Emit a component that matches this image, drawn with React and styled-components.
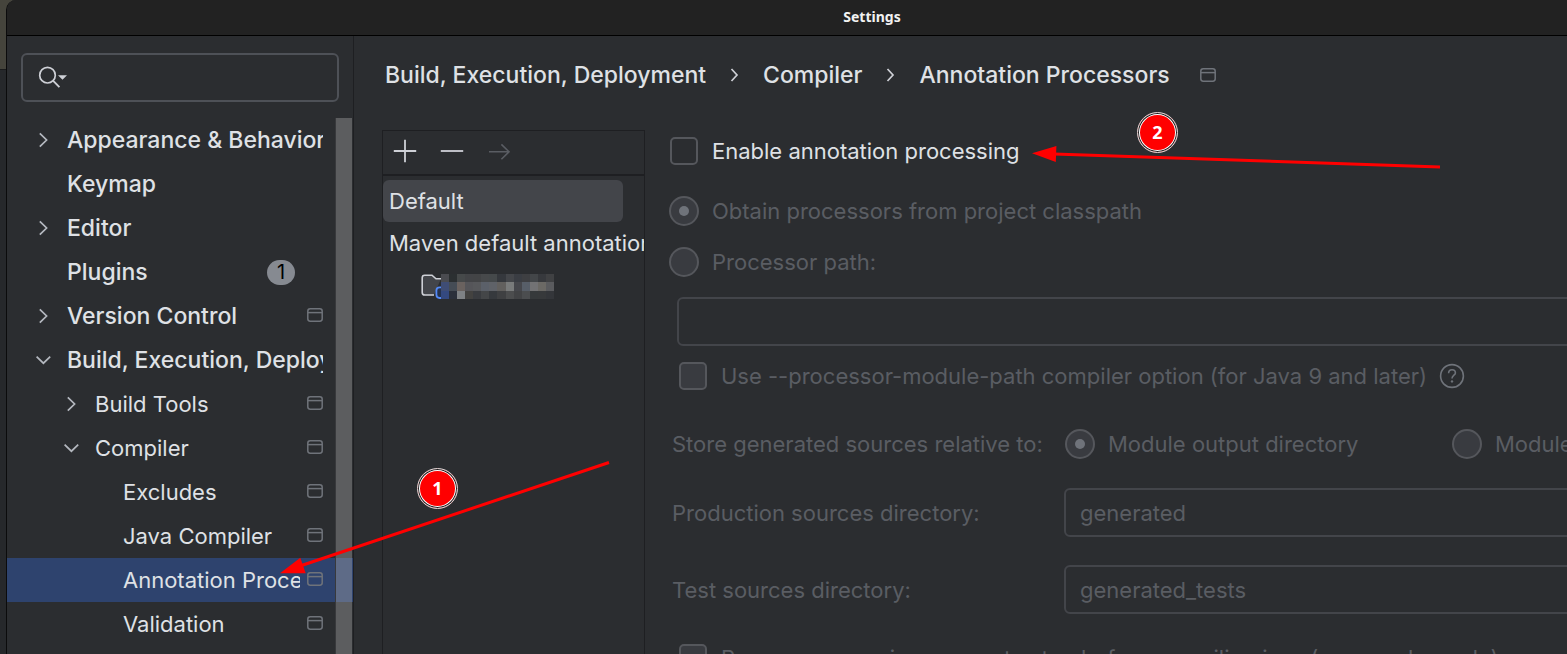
import styled, { createGlobalStyle } from "styled-components";

const GlobalStyle = createGlobalStyle`
  * {
    box-sizing: border-box;
  }

  body {
    margin: 0;
    background-color: #26282b;
    overflow: hidden;
  }

  body, input, button {
    font-family: Inter, sans-serif;
    font-size: 22px;
    line-height: 28px;
    color: #dfe1e5;
  }
`;

const Desktop = styled.div`
  position: relative;
  height: 100vh;
  overflow: hidden;
  padding-left: 6px;
  background: linear-gradient(#45443c 69px, #1a1b1c 69px, #1a1b1c 70px, #26282b 70px);
`;

/* The dialog is wider than the screen and runs off its right edge */
const Window = styled.div`
  height: 100%;
  margin-right: -170px;
  display: flex;
  flex-direction: column;
  border-left: 1px solid #0b0b0c;
  border-top-left-radius: 10px;
  background-color: #2b2d30;
  overflow: hidden;
`;

const TitleBar = styled.header`
  flex: none;
  height: 36px;
  display: flex;
  align-items: center;
  justify-content: center;
  padding-bottom: 1px;
  background-color: #222222;
  border-bottom: 1px solid #000;
  font-family: "Noto Sans", sans-serif;
  font-size: 14px;
  font-weight: 700;
  line-height: 20px;
  color: #f2f2f2;
`;

const Body = styled.div`
  flex: 1;
  min-height: 0;
  display: flex;
`;

const Sidebar = styled.aside`
  flex: none;
  width: 347px;
  display: flex;
  flex-direction: column;
  padding-top: 17px;
  border-right: 1px solid #1e1f22;
`;

const SearchBox = styled.label`
  flex: none;
  height: 49px;
  margin: 0 14px 16px;
  padding-left: 15px;
  display: flex;
  align-items: center;
  gap: 6px;
  border: 2px solid #4e5157;
  border-radius: 6px;
`;

const SearchInput = styled.input`
  flex: 1;
  min-width: 0;
  border: none;
  outline: none;
  background: none;
`;

const TreeArea = styled.nav`
  position: relative;
  flex: 1;
  min-height: 0;
  overflow: hidden;
`;

const Tree = styled.ul`
  margin: 0;
  padding: 0;
  list-style: none;
`;

const TreeRow = styled.li`
  height: 44px;
  display: flex;
  align-items: center;
  padding-left: ${(props) => 24 + props.$level * 28}px;
  padding-right: 30px;
  background-color: ${(props) => (props.$selected ? "#2e436e" : "transparent")};
  font-size: ${(props) => (props.$level === 0 ? 23 : 22)}px;
  font-weight: ${(props) => (props.$level === 0 ? 500 : 400)};
`;

const ChevronSlot = styled.span`
  flex: none;
  width: 24px;
  margin-right: 12px;
  display: flex;
  justify-content: center;
`;

const TreeLabel = styled.span`
  flex: 1;
  min-width: 0;
  overflow: hidden;
  white-space: nowrap;
`;

const CountBadge = styled.span`
  width: 28px;
  height: 25px;
  margin-right: 28px;
  border-radius: 13px;
  background-color: #868a91;
  color: #000;
  font-size: 20px;
  font-weight: 400;
  line-height: 25px;
  text-align: center;
`;

const RowIcon = styled.span`
  flex: none;
  display: flex;
  margin-left: 7px;
  padding-bottom: 2px;
`;

const ScrollThumb = styled.div`
  position: absolute;
  top: 0;
  right: 1px;
  bottom: 0;
  width: 17px;
  background-color: rgba(182, 182, 182, 0.35);
  border-left: 1px solid #38393c;
`;

const Main = styled.main`
  flex: 1;
  min-width: 0;
  display: flex;
  flex-direction: column;
  padding-left: 28px;
`;

const Breadcrumbs = styled.nav`
  flex: none;
  height: 94px;
  display: flex;
  align-items: center;
  gap: 24px;
  padding: 0 0 16px 3px;
  font-size: 23px;
  font-weight: 500;
  white-space: nowrap;
`;

const Crumb = styled.a`
  color: inherit;
  text-decoration: none;
`;

const CrumbIcon = styled.span`
  display: flex;
  margin-left: 6px;
`;

const Panels = styled.div`
  flex: 1;
  min-height: 0;
  display: flex;
`;

const ProfilePanel = styled.section`
  flex: none;
  width: 263px;
  overflow: hidden;
  border: 1px solid #1e1f22;
  border-bottom: none;
`;

const Toolbar = styled.div`
  height: 45px;
  display: flex;
  align-items: center;
  gap: 23px;
  padding: 0 0 3px 10px;
  border-bottom: 2px solid #1e1f22;
`;

const ToolButton = styled.button`
  width: 24px;
  height: 24px;
  padding: 0;
  display: flex;
  align-items: center;
  justify-content: center;
  border: none;
  background: none;
`;

const ProfileList = styled.ul`
  margin: 0;
  padding: 4px 0 0;
  list-style: none;
`;

const ProfileRow = styled.li`
  height: ${(props) => (props.$nested ? 46 : 42)}px;
  display: flex;
  align-items: center;
  margin-right: ${(props) => (props.$selected ? 21 : 0)}px;
  padding-left: ${(props) => (props.$nested ? 38 : 6)}px;
  border-radius: 6px;
  background-color: ${(props) => (props.$selected ? "#43454a" : "transparent")};
  white-space: nowrap;
`;

const ProfileName = styled.span`
  min-width: 0;
  overflow: hidden;
`;

const Form = styled.form`
  flex: 1;
  min-width: 0;
  padding-left: 24px;
  white-space: nowrap;
`;

const Choice = styled.label`
  display: flex;
  align-items: center;
  gap: 13px;
  color: ${(props) => (props.$disabled ? "#5a5d63" : "#dfe1e5")};
`;

const CheckRow = styled.div`
  height: 42px;
  display: flex;
  align-items: center;
  gap: 12px;
  margin-top: ${(props) => props.$top || 0}px;
  padding-left: ${(props) => (props.$nested ? 9 : 0)}px;
`;

const RadioRow = styled.div`
  height: 51px;
  display: flex;
  align-items: center;
`;

const RadioGroup = styled.div`
  margin-top: 13px;
`;

const Checkbox = styled.input`
  appearance: none;
  flex: none;
  width: 28px;
  height: 28px;
  margin: 0 1px;
  border: 2px solid #55575c;
  border-radius: 5px;

  &:disabled {
    background-color: #393b40;
  }
`;

const Radio = styled.input`
  appearance: none;
  flex: none;
  width: 30px;
  height: 30px;
  margin: 0;
  display: grid;
  place-items: center;
  border: 2px solid #55575c;
  border-radius: 50%;
  background-color: #393b40;

  &:checked::before {
    content: "";
    width: 10px;
    height: 10px;
    border-radius: 50%;
    background-color: #6f737a;
  }
`;

const TextField = styled.input`
  min-width: 0;
  height: 49px;
  padding: 0 14px;
  border: 2px solid #43454a;
  border-radius: 6px;
  background: none;
  color: #5a5d63;
`;

const PathRow = styled.div`
  display: grid;
  margin-top: 10px;
  padding-left: 8px;
`;

const FieldRow = styled.div`
  display: grid;
  grid-template-columns: 392px 1fr;
  align-items: center;
  min-height: 42px;
  margin-top: ${(props) => props.$top}px;
  padding-left: 3px;
  color: #5a5d63;
`;

const InlineRadios = styled.div`
  display: grid;
  grid-template-columns: 387px 1fr;
  padding-left: 1px;
`;

const HelpButton = styled.button`
  display: flex;
  padding: 0;
  border: none;
  background: none;
`;

const Annotations = styled.svg`
  position: absolute;
  top: 0;
  left: 0;
  width: 100%;
  height: 100%;
  pointer-events: none;
`;

const Marker = styled.span`
  position: absolute;
  left: ${(props) => props.$x}px;
  top: ${(props) => props.$y}px;
  width: 41px;
  height: 41px;
  border: 1px solid #d8d8d8;
  border-radius: 50%;
  background-color: #f00;
  box-shadow: inset 0 0 0 1px #1c1c1e, inset 0 0 0 2px #fff;
  color: #fff;
  font-family: "Noto Sans", sans-serif;
  font-size: 18px;
  font-weight: 700;
  line-height: 38px;
  text-align: center;
`;

const Chevron = ({ open }) => (
  <svg width="16" height="16" viewBox="0 0 16 16" fill="none" stroke="#b4b8bf" strokeWidth="1.7">
    <path d={open ? "M1.6 4.6 L8.4 11.2 L15.2 4.6" : "M4.8 1.4 L11.6 8 L4.8 14.6"} />
  </svg>
);

const CrumbChevron = () => (
  <svg width="9" height="14" viewBox="0 0 9 14" fill="none" stroke="#ced0d6" strokeWidth="1.7">
    <path d="M1.5 1 L7 7 L1.5 13" />
  </svg>
);

const ProjectIcon = () => (
  <svg width="16" height="14" viewBox="0 0 16 14" fill="none" stroke="#6f737a" strokeWidth="1.5">
    <rect x="0.8" y="0.8" width="14.4" height="12.4" rx="2.4" />
    <path d="M1 4.6 H15" />
  </svg>
);

const SearchIcon = () => (
  <svg width="30" height="24" viewBox="0 0 30 24" fill="none">
    <circle cx="9.5" cy="9.2" r="7.8" stroke="#ced0d6" strokeWidth="1.7" />
    <path d="M15 14.7 L21.4 21.1" stroke="#ced0d6" strokeWidth="1.9" />
    <path d="M20 9.3 H29 L24.5 13.7 Z" fill="#ced0d6" />
  </svg>
);

const PlusIcon = () => (
  <svg width="24" height="24" viewBox="0 0 24 24" stroke="#ced0d6" strokeWidth="1.8">
    <path d="M12 0.8 V23.2 M0.8 12 H23.2" />
  </svg>
);

const MinusIcon = () => (
  <svg width="24" height="24" viewBox="0 0 24 24" stroke="#ced0d6" strokeWidth="1.8">
    <path d="M0.8 12 H23.2" />
  </svg>
);

const ArrowIcon = () => (
  <svg width="24" height="24" viewBox="0 0 24 24" fill="none" stroke="#5a5d63" strokeWidth="1.6">
    <path d="M2 12.8 H22 M14.4 5.4 L22 12.8 L14.4 20.2" />
  </svg>
);

const HelpIcon = () => (
  <svg width="26" height="26" viewBox="0 0 26 26" fill="none" stroke="#6f737a" strokeWidth="1.6">
    <circle cx="13" cy="13" r="11.4" />
    <path d="M9.6 10.2 C9.7 8 11.1 6.8 13 6.8 C15 6.8 16.4 8 16.4 9.9 C16.4 12.2 13 12.4 13 15.6" />
    <circle cx="13" cy="18.4" r="1.2" fill="#6f737a" stroke="none" />
  </svg>
);

const pixels = [
  ["4a4b50", "2b2f31", "46494a", "434447", "434446", "47494b", "45494b", "35383d", "44464a", "3a3d43", "3e3f42", "434649", "37393d", "404143"],
  ["3f4d75", "454c55", "6a625f", "555559", "57585b", "5b6069", "5f6268", "62605e", "797b7b", "46474c", "575e68", "727274", "6b6965", "5a5b5e"],
  ["34497f", "2b303b", "7f8285", "434240", "3a3c40", "444648", "36393d", "3f4042", "4c4d4e", "424345", "4b4d4f", "36393b", "37393b", "34363a"],
];

/* Module folder with its name pixelated out */
const HiddenModule = () => (
  <svg width="134" height="26" viewBox="0 0 134 26" fill="none">
    <path
      d="M20 4.8 H15 L11 1.2 H3.6 Q1.2 1.2 1.2 3.8 V18.4 Q1.2 21 3.8 21 H13"
      fill="#43454a"
      stroke="#ced0d6"
      strokeWidth="1.6"
    />
    <path d="M21 13.4 H18.6 Q15.4 13.4 15.4 16.6 V20.8 Q15.4 24 18.6 24 H21" fill="#25324d" stroke="#548af7" strokeWidth="1.8" />
    <g shapeRendering="crispEdges">
      {pixels.map((line, y) =>
        line.map((color, x) => (
          <rect key={`${x}-${y}`} x={20 + x * 8.07} y={y * 8.34} width="8.1" height="8.4" fill={`#${color}`} />
        ))
      )}
    </g>
  </svg>
);

const treeItems = [
  { name: "Appearance & Behavior", level: 0, open: false },
  { name: "Keymap", level: 0 },
  { name: "Editor", level: 0, open: false },
  { name: "Plugins", level: 0, count: 1 },
  { name: "Version Control", level: 0, open: false, project: true },
  { name: "Build, Execution, Deployment", level: 0, open: true },
  { name: "Build Tools", level: 1, open: false, project: true },
  { name: "Compiler", level: 1, open: true, project: true },
  { name: "Excludes", level: 2, project: true },
  { name: "Java Compiler", level: 2, project: true },
  { name: "Annotation Processors", level: 2, project: true, selected: true },
  { name: "Validation", level: 2, project: true },
];

const SettingsTree = () => (
  <TreeArea aria-label="Settings sections">
    <Tree>
      {treeItems.map((item) => (
        <TreeRow key={item.name} $level={item.level} $selected={item.selected}>
          <ChevronSlot>{item.open !== undefined && <Chevron open={item.open} />}</ChevronSlot>
          <TreeLabel>{item.name}</TreeLabel>
          {item.count && <CountBadge>{item.count}</CountBadge>}
          {item.project && (
            <RowIcon>
              <ProjectIcon />
            </RowIcon>
          )}
        </TreeRow>
      ))}
    </Tree>
    <ScrollThumb />
  </TreeArea>
);

const Profiles = () => (
  <ProfilePanel>
    <Toolbar>
      <ToolButton type="button" aria-label="Add">
        <PlusIcon />
      </ToolButton>
      <ToolButton type="button" aria-label="Remove">
        <MinusIcon />
      </ToolButton>
      <ToolButton type="button" aria-label="Move to" disabled>
        <ArrowIcon />
      </ToolButton>
    </Toolbar>
    <ProfileList>
      <ProfileRow $selected>
        <ProfileName>Default</ProfileName>
      </ProfileRow>
      <ProfileRow>
        <ProfileName>Maven default annotation processors profile</ProfileName>
      </ProfileRow>
      <ProfileRow $nested>
        <HiddenModule />
      </ProfileRow>
    </ProfileList>
  </ProfilePanel>
);

const ProcessorForm = () => (
  <Form>
    <CheckRow>
      <Choice>
        <Checkbox type="checkbox" />
        Enable annotation processing
      </Choice>
    </CheckRow>
    <RadioGroup>
      <RadioRow>
        <Choice $disabled>
          <Radio type="radio" name="source" defaultChecked disabled />
          Obtain processors from project classpath
        </Choice>
      </RadioRow>
      <RadioRow>
        <Choice $disabled>
          <Radio type="radio" name="source" disabled />
          Processor path:
        </Choice>
      </RadioRow>
    </RadioGroup>
    <PathRow>
      <TextField type="text" aria-label="Processor path" disabled />
    </PathRow>
    <CheckRow $top={9} $nested>
      <Choice $disabled>
        <Checkbox type="checkbox" disabled />
        Use --processor-module-path compiler option (for Java 9 and later)
      </Choice>
      <HelpButton type="button" aria-label="Help">
        <HelpIcon />
      </HelpButton>
    </CheckRow>
    <FieldRow $top={26}>
      <span>Store generated sources relative to:</span>
      <InlineRadios>
        <Choice $disabled>
          <Radio type="radio" name="relative" defaultChecked disabled />
          Module output directory
        </Choice>
        <Choice $disabled>
          <Radio type="radio" name="relative" disabled />
          Module content root
        </Choice>
      </InlineRadios>
    </FieldRow>
    <FieldRow $top={23}>
      <label htmlFor="production">Production sources directory:</label>
      <TextField id="production" type="text" defaultValue="generated" disabled />
    </FieldRow>
    <FieldRow $top={28}>
      <label htmlFor="test">Test sources directory:</label>
      <TextField id="test" type="text" defaultValue="generated_tests" disabled />
    </FieldRow>
    <CheckRow $top={23} $nested>
      <Choice $disabled>
        <Checkbox type="checkbox" disabled />
        Run processors in a separate step before compiling java (-proc:only mode)
      </Choice>
    </CheckRow>
  </Form>
);

const App = () => {
  return (
    <>
      <GlobalStyle />
      <Desktop>
        <Window>
          <TitleBar>Settings</TitleBar>
          <Body>
            <Sidebar>
              <SearchBox>
                <SearchIcon />
                <SearchInput type="text" aria-label="Search settings" />
              </SearchBox>
              <SettingsTree />
            </Sidebar>
            <Main>
              <Breadcrumbs aria-label="Breadcrumb">
                <Crumb href="#build">Build, Execution, Deployment</Crumb>
                <CrumbChevron />
                <Crumb href="#compiler">Compiler</Crumb>
                <CrumbChevron />
                <Crumb href="#processors">Annotation Processors</Crumb>
                <CrumbIcon>
                  <ProjectIcon />
                </CrumbIcon>
              </Breadcrumbs>
              <Panels>
                <Profiles />
                <ProcessorForm />
              </Panels>
            </Main>
          </Body>
        </Window>
        <Annotations fill="#f00" stroke="none">
          <path d="M609 462.5 L300 566" stroke="#f00" strokeWidth="3" />
          <path d="M280 573.3 L300.3 557.7 L305.7 573.2 Z" />
          <path d="M1440 167 L1054 154" stroke="#f00" strokeWidth="3" />
          <path d="M1032 153.3 L1056.4 146 L1055.8 162 Z" />
        </Annotations>
        <Marker $x={417} $y={468}>1</Marker>
        <Marker $x={1137} $y={112}>2</Marker>
      </Desktop>
    </>
  );
};

export default App;
